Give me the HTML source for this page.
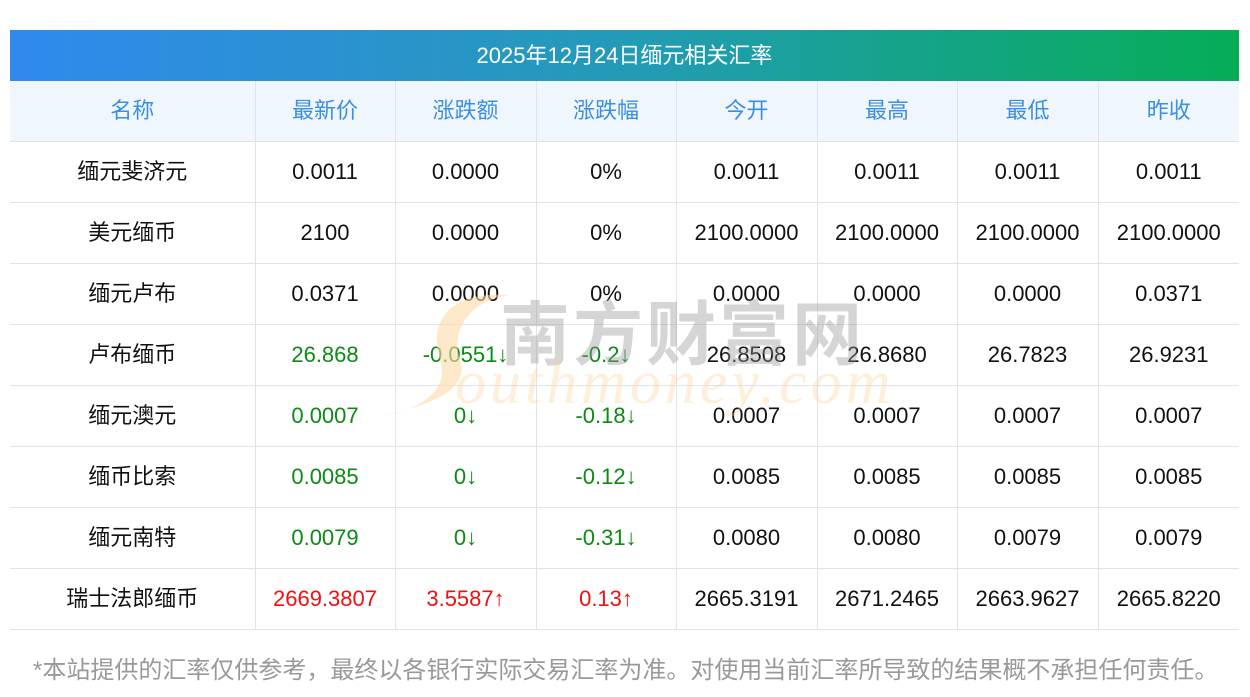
<!DOCTYPE html>
<html><head><meta charset="utf-8"><style>
body{margin:0;width:1250px;height:697px;background:#fff;font-family:"Liberation Sans","Noto Sans CJK SC",sans-serif;position:relative;overflow:hidden}
.title{position:absolute;left:10px;top:30px;width:1229px;height:51px;background:linear-gradient(90deg,#3189ee,#239bb7 50%,#06ad56);color:#fff;font-size:22px;text-align:center;line-height:51px}
table{position:absolute;left:10px;top:81px;border-collapse:collapse;width:1229px;table-layout:fixed}
td{height:60px;border:1px solid #dfe3ee;text-align:center;font-size:22px;color:#111;padding:0;line-height:24px}
tr td:first-child{border-left:none}tr td:last-child{border-right:none}
tr.h td{background:#f0f6fe;color:#3b8fe3;border-top:none}
.g{color:#0b8a14}.r{color:#f01010}
.foot{position:absolute;left:33px;top:650px;font-size:24px;color:#999;white-space:nowrap}
.wm{position:absolute;pointer-events:none;white-space:nowrap}
</style></head><body>
<div class="title">2025年12月24日缅元相关汇率</div>
<table>
<colgroup><col style="width:245px"><col style="width:140px"><col style="width:141px"><col style="width:140px"><col style="width:141px"><col style="width:140px"><col style="width:141px"><col style="width:141px"></colgroup>
<tr class="h"><td>名称</td><td>最新价</td><td>涨跌额</td><td>涨跌幅</td><td>今开</td><td>最高</td><td>最低</td><td>昨收</td></tr>
<tr><td>缅元斐济元</td><td>0.0011</td><td>0.0000</td><td>0%</td><td>0.0011</td><td>0.0011</td><td>0.0011</td><td>0.0011</td></tr>
<tr><td>美元缅币</td><td>2100</td><td>0.0000</td><td>0%</td><td>2100.0000</td><td>2100.0000</td><td>2100.0000</td><td>2100.0000</td></tr>
<tr><td>缅元卢布</td><td>0.0371</td><td>0.0000</td><td>0%</td><td>0.0000</td><td>0.0000</td><td>0.0000</td><td>0.0371</td></tr>
<tr><td>卢布缅币</td><td class="g">26.868</td><td class="g">-0.0551↓</td><td class="g">-0.2↓</td><td>26.8508</td><td>26.8680</td><td>26.7823</td><td>26.9231</td></tr>
<tr><td>缅元澳元</td><td class="g">0.0007</td><td class="g">0↓</td><td class="g">-0.18↓</td><td>0.0007</td><td>0.0007</td><td>0.0007</td><td>0.0007</td></tr>
<tr><td>缅币比索</td><td class="g">0.0085</td><td class="g">0↓</td><td class="g">-0.12↓</td><td>0.0085</td><td>0.0085</td><td>0.0085</td><td>0.0085</td></tr>
<tr><td>缅元南特</td><td class="g">0.0079</td><td class="g">0↓</td><td class="g">-0.31↓</td><td>0.0080</td><td>0.0080</td><td>0.0079</td><td>0.0079</td></tr>
<tr><td>瑞士法郎缅币</td><td class="r">2669.3807</td><td class="r">3.5587↑</td><td class="r">0.13↑</td><td>2665.3191</td><td>2671.2465</td><td>2663.9627</td><td>2665.8220</td></tr>
</table>
<svg class="wm" style="left:380px;top:290px" width="140" height="130"><path d="M130 5 C60 0 50 40 60 70 C70 100 40 120 5 125 C50 115 90 100 80 70 C70 40 90 10 130 5Z" fill="#fbd9a6" opacity="0.6"/></svg>
<div class="wm" style="left:500px;top:300px;font-size:70px;line-height:70px;color:rgba(150,150,150,0.4);letter-spacing:3px;font-weight:bold">南方财富网</div>
<div class="wm" style="left:455px;top:352px;font-size:62px;line-height:62px;color:rgba(251,210,150,0.35);font-family:'Liberation Serif',serif;font-style:italic;letter-spacing:4px">outhmoney.com</div>
<div class="foot">*本站提供的汇率仅供参考，最终以各银行实际交易汇率为准。对使用当前汇率所导致的结果概不承担任何责任。</div>
</body></html>
